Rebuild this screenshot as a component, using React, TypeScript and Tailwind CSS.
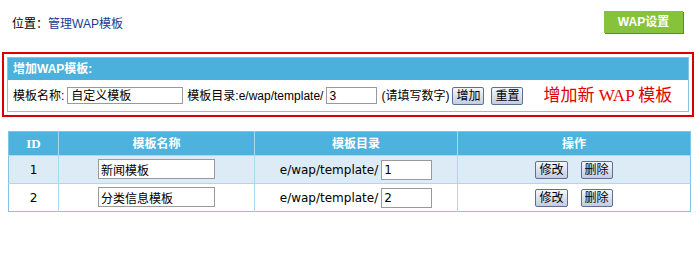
import React from 'react';

const rows = [
  { id: 1, name: '新闻模板', dir: '1' },
  { id: 2, name: '分类信息模板', dir: '2' },
];

// old-style grey/blue form button
const Btn: React.FC<{ label: string; className?: string }> = ({ label, className = '' }) => (
  <button
    type="button"
    className={`h-[18px] px-[3px] leading-[16px] text-[12px] text-black border border-[#5f6f8f] rounded-[2px] bg-gradient-to-b from-[#f4f6fb] to-[#c3cde2] ${className}`}
  >
    {label}
  </button>
);

export default function App() {
  return (
    <div className="w-[700px] h-[257px] bg-white text-[12px] text-black font-['Liberation_Sans','Noto_Sans_CJK_SC',sans-serif]">
      {/* breadcrumb + setting button */}
      <div className="flex items-center justify-between h-[44px] pl-[12px] pr-[17px]">
        <div className="pt-[3px]">
          位置：<span className="text-[#1b3a8c]">管理WAP模板</span>
        </div>
        <button
          type="button"
          className="w-[79px] h-[22px] bg-[#87c23b] text-white font-bold text-[12px] shadow-[1px_1px_0_#5e8d24]"
        >
          WAP设置
        </button>
      </div>

      {/* add template panel */}
      <div className="mt-[8px] ml-[2px] w-[692px] border-2 border-[#d90000] p-[3px]">
        <div className="border border-[#7fc5e5]">
          <div className="h-[22px] bg-[#4bb1dc] text-white font-bold pl-[5px] flex items-center">
            增加WAP模板:
          </div>
          <div className="h-[31px] flex items-center pl-[5px]">
            <span>模板名称:</span>
            <input
              defaultValue="自定义模板"
              className="ml-[3px] w-[116px] h-[17px] border border-[#9a9a9a] px-[3px] text-[12px] outline-none"
            />
            <span className="ml-[4px]">模板目录:e/wap/template/</span>
            <input
              defaultValue="3"
              className="ml-[3px] w-[51px] h-[17px] border border-[#9a9a9a] px-[2px] text-[12px] outline-none"
            />
            <span className="ml-[4px]">(请填写数字)</span>
            <Btn label="增加" className="ml-[3px] px-[1px]" />
            <Btn label="重置" className="ml-[7px] px-[1px]" />
            <span className="ml-[20px] text-[17px] leading-none text-[#e00000] font-['Liberation_Serif','Noto_Sans_CJK_SC',serif]">
              增加新 WAP 模板
            </span>
          </div>
        </div>
      </div>

      {/* template list */}
      <table className="mt-[14px] ml-[8px] w-[682px] table-fixed border-collapse border border-[#7fc5e5] font-['DejaVu_Sans','Noto_Sans_CJK_SC',sans-serif] text-[12px]">
        <colgroup>
          <col className="w-[50px]" />
          <col className="w-[196px]" />
          <col className="w-[203px]" />
          <col className="w-[233px]" />
        </colgroup>
        <thead>
          <tr className="h-[24px] bg-[#4db2de] text-white font-bold">
            <th className="border-r border-[#a8d9ef] font-['Liberation_Serif','Noto_Sans_CJK_SC',serif] text-[13px]">ID</th>
            <th className="border-r border-[#a8d9ef]">模板名称</th>
            <th className="border-r border-[#a8d9ef]">模板目录</th>
            <th>操作</th>
          </tr>
        </thead>
        <tbody>
          {rows.map((r, i) => (
            <tr key={r.id} className={`h-[28px] ${i === 0 ? 'bg-[#dcebf5]' : 'bg-white'} border-t border-[#a8d9ef]`}>
              <td className="text-center border-r border-[#a8d9ef]">{r.id}</td>
              <td className="text-center border-r border-[#a8d9ef]">
                <input
                  defaultValue={r.name}
                  className="w-[117px] h-[20px] border border-[#9a9a9a] bg-white px-[2px] text-[12px] font-['Liberation_Sans','Noto_Sans_CJK_SC',sans-serif] outline-none"
                />
              </td>
              <td className="text-center border-r border-[#a8d9ef]">
                <span>e/wap/template/</span>
                <input
                  defaultValue={r.dir}
                  className="ml-[3px] w-[51px] h-[20px] border border-[#9a9a9a] bg-white px-[2px] text-[12px] outline-none"
                />
              </td>
              <td className="text-center">
                <Btn label="修改" />
                <Btn label="删除" className="ml-[13px]" />
              </td>
            </tr>
          ))}
        </tbody>
      </table>
    </div>
  );
}
